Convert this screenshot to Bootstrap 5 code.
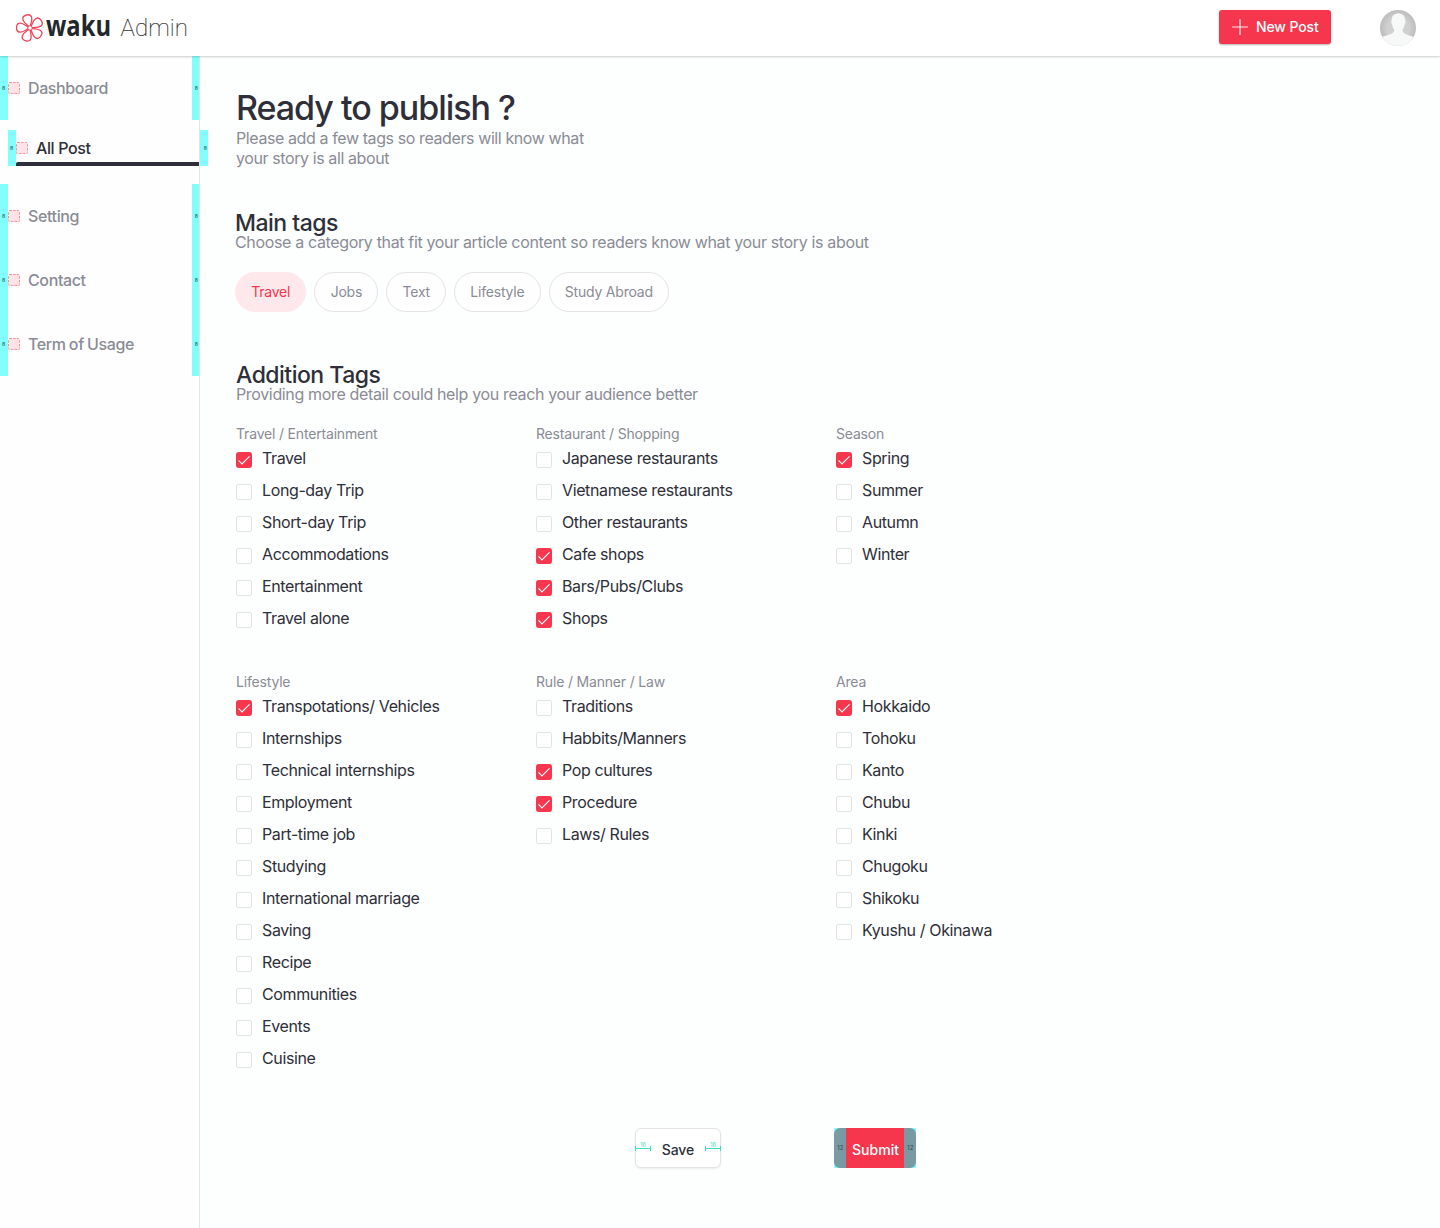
<!DOCTYPE html>
<html lang="en">
<head>
<meta charset="utf-8">
<meta name="viewport" content="width=device-width, initial-scale=1">
<title>Waku Admin</title>
<link href="https://cdn.jsdelivr.net/npm/bootstrap@5.3.0/dist/css/bootstrap.min.css" rel="stylesheet">
<style>
body{font-family:Inter,"Liberation Sans",sans-serif;font-size:16px;line-height:20px;letter-spacing:-.35px;color:#2e2f38;background:#fdfefe;height:1228px;overflow:hidden}
.topbar{height:56px;padding:0 24px 0 16px;box-shadow:0 1px 2px rgba(0,0,0,.2);position:relative;z-index:2}
.new-post{width:112px;height:34px;margin:-2px 49px 0 0;padding:0 0 1px 13px;gap:8px;border:0;border-radius:3px;font-size:14px;font-weight:500;letter-spacing:-.12px;box-shadow:0 1px 2px rgba(0,0,0,.3)}
.new-post,.new-post:hover{background:#f5364c;color:#fff}
.sidebar{width:200px;border-right:1px solid #e3e3e5;height:1172px;background:#fefefe}
.side-item{height:64px;border:solid #82fffc;border-width:0 7px 0 8px;color:#8a8c95;font-weight:500;letter-spacing:-.38px;word-spacing:-.7px;position:relative}
.side-item.current{height:36px;width:200px;margin:10px 0 18px 8px;border-right-width:8px;color:#2e2f38;word-spacing:0}
.bar-line{position:absolute;left:0;right:1px;bottom:0;height:4px;background:#2e2f38;border-radius:2px 0 0 0}
.slot{margin-right:8px;flex:none}
.pad-num{position:absolute;font-size:5px;line-height:6px;letter-spacing:0;color:#35706f;top:50%;margin-top:-3px;font-weight:600}
.pad-num.at-left{left:-6px}
.pad-num.at-right{right:-6px}
.current .pad-num.at-right{right:-7px}
.content-pane{padding:30px 0 0 36px}
h1{font-size:34px;line-height:44px;font-weight:500;letter-spacing:-1.02px;margin:0 0 -2px}
h2{font-size:23px;line-height:24px;font-weight:500;letter-spacing:-.5px;margin:0 0 -3px}
.hint{color:#8a8c95;margin:0}
.intro{width:370px;letter-spacing:-.4px}
.main-tags{margin:43px 0 51px -1px}
.pill-row{margin-top:20px}
.pill{height:40px;padding:0 15.2px;border:1px solid #e3e5e5;border-radius:20px;font-size:14px;letter-spacing:-.21px;color:#8a8c95;background:#fefefe}
.pill.on{background:#fee8eb;border-color:#fee8eb;color:#f5364c}
.tag-col{width:300px}
.tag-band{margin-top:22px}
.tag-band + .tag-band{margin-top:34px}
.group-title{font-size:14px;line-height:16px;letter-spacing:-.18px;color:#8a8c95;margin:0 0 6px}
.tick-row{height:32px;gap:10px;letter-spacing:-.38px}
.tick{width:16px;height:16px;margin-top:4px;border:1px solid #e1e2e4;border-radius:2.5px;background:#fff;flex:none}
.tick.on{background:#f5364c;border-color:#f5364c}
.tick svg{display:block;margin:-1px}
.actions{margin:48px 0 0 399px;gap:113px}
.save-btn,.submit-btn{height:40px;font-size:14px;line-height:20px;font-weight:500;letter-spacing:-.1px;position:relative;padding:3px 0 0}
.save-btn,.save-btn:hover{width:86px;border:1px solid #e3e5e5;border-radius:6px;background:#fff;color:#2e2f38;box-shadow:0 1px 2px rgba(0,0,0,.08)}
.submit-btn{letter-spacing:.05px;padding-left:1px}
.submit-btn,.submit-btn:hover{width:82px;color:#fff;background:#82fffc;border:0;border-radius:0}
.submit-btn svg,.save-btn svg{position:absolute;left:0;top:0}
.save-btn svg{left:-1px;top:-1px}
.submit-btn span{position:relative}
</style>
<script src="https://cdn.jsdelivr.net/npm/bootstrap@5.3.0/dist/js/bootstrap.bundle.min.js"></script>
</head>
<body>
<header class="topbar d-flex align-items-center bg-white">
<svg width="180" height="56" viewBox="16 0 180 56" role="img" aria-label="waku Admin">
<defs><path id="petal" d="M-1-1.800C-1.700-4-4.500-6.500-4.500-9.800C-4.500-12.200-2.400-13.500 0-13.500S4.500-12.200 4.500-9.800C4.500-6.500 1.700-4 1-1.800"/></defs>
<g transform="translate(30 28)" fill="none" stroke="#f2485c" stroke-width="1.350"><use href="#petal" transform="rotate(-16)"/><use href="#petal" transform="rotate(56)"/><use href="#petal" transform="rotate(128)"/><use href="#petal" transform="rotate(200)"/><use href="#petal" transform="rotate(272)"/><circle r="2.300" stroke-width="1"/></g>
<text x="46" y="36" font-family="Open Sans" font-weight="700" font-size="28" textLength="65" lengthAdjust="spacingAndGlyphs" letter-spacing="0" fill="#23262b">waku</text>
<text x="120.500" y="36" font-family="Roboto" font-weight="100" font-size="24" letter-spacing=".1" fill="#333" stroke="#333" stroke-width=".2">Admin</text>
</svg>
<button class="new-post btn d-flex align-items-center ms-auto"><svg width="16" height="16" viewBox="0 0 16 16" stroke="#fff" stroke-width="1.200" opacity=".9"><path d="M8 0V16M0 8H16"/></svg>New Post</button>
<svg width="36" height="36" viewBox="0 0 36 36"><defs><clipPath id="face"><circle cx="18" cy="18" r="18"/></clipPath><radialGradient id="shade"><stop offset=".6" stop-color="#d0d0d0"/><stop offset="1" stop-color="#bcbcbc"/></radialGradient></defs><g clip-path="url(#face)"><rect width="36" height="36" fill="url(#shade)"/><path fill="#f7f9f9" d="M18.300 3.500C22.500 3.500 25.200 6 25.200 10.500C25.800 11 25.500 13.500 24.600 14.500C24.200 17 23.500 18.500 22.500 19.700C22.700 23 25 24 28.500 25.200C32 26.400 34 26.300 35 28V37H1V28C2 26.300 4.500 26.300 8 25C11.500 23.800 14 23 14.300 19.700C13.200 18.500 12.600 17 12.200 14.500C11.200 13.500 11 11 11.700 10.500C11.500 6 14 3.500 18.300 3.500Z"/></g></svg>
</header>
<div class="d-flex">
<nav class="sidebar flex-shrink-0" id="side"></nav>
<main class="content-pane flex-grow-1">
<h1>Ready to publish ?</h1>
<p class="hint intro">Please add a few tags so readers will know what<br>your story is all about</p>
<section class="main-tags">
<h2>Main tags</h2>
<p class="hint">Choose a category that fit your article content so readers know what your story is about</p>
<div class="pill-row d-flex gap-2">
<span class="pill on d-flex align-items-center">Travel</span><span class="pill d-flex align-items-center">Jobs</span><span class="pill d-flex align-items-center">Text</span><span class="pill d-flex align-items-center">Lifestyle</span><span class="pill d-flex align-items-center">Study Abroad</span>
</div>
</section>
<section>
<h2>Addition Tags</h2>
<p class="hint">Providing more detail could help you reach your audience better</p>
<div id="bands"></div>
</section>
<div class="actions d-flex">
<button class="save-btn btn">Save<svg width="86" height="40" fill="none" stroke="#3fdcc4"><path d="M.5 18V23M15.500 18V23M0 20.500H16M70.500 18V23M85.500 18V23M70 20.500H86"/><g fill="#3fdcc4" stroke="none" font-size="5.500" font-weight="400" letter-spacing="0" text-anchor="middle"><text x="8" y="19">16</text><text x="78" y="19">16</text></g></svg></button>
<button class="submit-btn btn"><svg width="82" height="40"><rect width="82" height="40" rx="6" fill="#7a9aa3"/><path fill="#f5364c" d="M12 0H70V40H12Z"/><g fill="#354b50" font-size="5.500" letter-spacing=".3" text-anchor="middle"><text x="6.500" y="22">12</text><text x="76.500" y="22">12</text></g></svg><span>Submit</span></button>
</div>
</main>
</div>
<script>
const slot='<svg class="slot" width="12" height="12"><rect x=".5" y=".5" width="11" height="11" rx="1" fill="#ffe3e6" stroke="#f78f9a" stroke-dasharray="2.500 1.200"/></svg>';
document.getElementById('side').innerHTML=['Dashboard','All Post','Setting','Contact','Term of Usage'].map(t=>{
  const cur=t==='All Post';
  return `<div class="side-item d-flex align-items-center${cur?' current':''}"><span class="pad-num at-left">8</span>${slot}<span>${t}</span><span class="pad-num at-right">8</span>${cur?'<i class="bar-line"></i>':''}</div>`;
}).join('');
// A leading asterisk marks a selected tag.
const bands=[
 [['Travel / Entertainment','*Travel','Long-day Trip','Short-day Trip','Accommodations','Entertainment','Travel alone'],
  ['Restaurant / Shopping','Japanese restaurants','Vietnamese restaurants','Other restaurants','*Cafe shops','*Bars/Pubs/Clubs','*Shops'],
  ['Season','*Spring','Summer','Autumn','Winter']],
 [['Lifestyle','*Transpotations/ Vehicles','Internships','Technical internships','Employment','Part-time job','Studying','International marriage','Saving','Recipe','Communities','Events','Cuisine'],
  ['Rule / Manner / Law','Traditions','Habbits/Manners','*Pop cultures','*Procedure','Laws/ Rules'],
  ['Area','*Hokkaido','Tohoku','Kanto','Chubu','Kinki','Chugoku','Shikoku','Kyushu / Okinawa']]];
const check='<svg width="16" height="16" fill="none" stroke="#fff" stroke-width="1.200"><path d="M2.500 8.300L6 11.800L13.500 4.300"/></svg>';
document.getElementById('bands').innerHTML=bands.map(b=>'<div class="tag-band d-flex">'+b.map(([h,...r])=>`<div class="tag-col"><p class="group-title">${h}</p>`+r.map(t=>{
  const on=t[0]==='*';
  return `<div class="tick-row d-flex align-items-start"><span class="tick${on?' on':''}">${on?check:''}</span><span>${on?t.slice(1):t}</span></div>`;
}).join('')+'</div>').join('')+'</div>').join('');
</script>
</body></html>
